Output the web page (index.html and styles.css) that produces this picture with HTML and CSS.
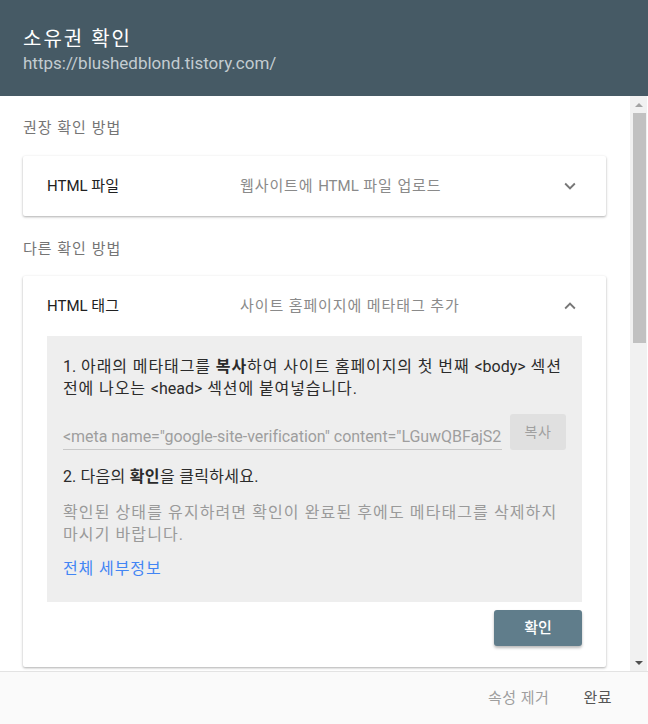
FILE: index.html
```html
<!DOCTYPE html>
<html lang="ko">
<head>
<meta charset="utf-8">
<title>소유권 확인</title>
<link rel="stylesheet" href="styles.css">
</head>
<body>
<div class="dialog">
  <header class="head">
    <div class="head-title">소유권 확인</div>
    <div class="head-url">https://blushedblond.tistory.com/</div>
  </header>
  <div class="middle">
    <div class="content">
      <div class="label first">권장 확인 방법</div>
      <div class="card">
        <div class="card-row">
          <span class="row-title">HTML 파일</span>
          <span class="row-desc">웹사이트에 <span class="lat">HTML</span> 파일 업로드</span>
          <svg class="chev" viewBox="0 0 24 24" width="22" height="22"><path d="M7.41 8.59L12 13.17l4.59-4.58L18 10l-6 6-6-6 1.41-1.41z" fill="#777"/></svg>
        </div>
      </div>
      <div class="label second">다른 확인 방법</div>
      <div class="card">
        <div class="card-row">
          <span class="row-title">HTML 태그</span>
          <span class="row-desc">사이트 홈페이지에 메타태그 추가</span>
          <svg class="chev" viewBox="0 0 24 24" width="22" height="22"><path d="M7.41 15.41L12 10.83l4.59 4.58L18 14l-6-6-6 6 1.41 1.41z" fill="#777"/></svg>
        </div>
        <div class="panel">
          <p class="step"><span class="ln"><span class="lat">1.</span> 아래의 메타태그를 <b>복사</b>하여 사이트 홈페이지의 첫 번째 <span class="lat">&lt;body&gt;</span> 섹션</span><span class="ln">전에 나오는 <span class="lat">&lt;head&gt;</span> 섹션에 붙여넣습니다<span class="lat">.</span></span></p>
          <div class="copy-row">
            <div class="meta-field">&lt;meta name="google-site-verification" content="LGuwQBFajS2</div>
            <div class="copy-btn">복사</div>
          </div>
          <p class="step step2"><span class="lat">2.</span> 다음의 <b>확인</b>을 클릭하세요<span class="lat">.</span></p>
          <p class="note"><span class="ln">확인된 상태를 유지하려면 확인이 완료된 후에도 메타태그를 삭제하지</span><span class="ln">마시기 바랍니다<span class="lat">.</span></span></p>
          <a class="details" href="#">전체 세부정보</a>
        </div>
        <div class="actions">
          <div class="confirm">확인</div>
        </div>
      </div>
    </div>
    <div class="scrollbar">
      <div class="arrow up"></div>
      <div class="thumb"></div>
      <div class="spacer"></div>
      <div class="arrow down"></div>
    </div>
    <div class="edge"></div>
  </div>
  <footer class="foot">
    <span class="foot-btn muted">속성 제거</span>
    <span class="foot-btn">완료</span>
  </footer>
</div>
</body>
</html>
```

FILE: styles.css
```css
* { box-sizing: border-box; }
html, body { margin: 0; padding: 0; }
body {
  width: 648px;
  height: 724px;
  overflow: hidden;
  background: #fff;
  font-family: Roboto, "Noto Sans CJK KR", sans-serif;
  color: #212121;
}
.lat { letter-spacing: 0; }
.dialog {
  display: flex;
  flex-direction: column;
  width: 648px;
  height: 724px;
}
.head {
  height: 96px;
  flex: none;
  background: #465a65;
  padding: 26px 23px 0;
}
.head-title {
  color: #fff;
  font-size: 20px;
  line-height: 26px;
  letter-spacing: 2px;
}
.head-url {
  color: #c3ccd1;
  font-size: 17px;
  line-height: 20px;
  margin-top: 1px;
}
.middle {
  flex: 1;
  display: flex;
  min-height: 0;
}
.content {
  flex: 1;
  overflow: hidden;
  padding: 22px 24px 0 23px;
}
.label {
  font-size: 15px;
  line-height: 20px;
  color: #757575;
  letter-spacing: 1px;
}
.label.first { margin-bottom: 18px; }
.label.second { margin-top: 23px; margin-bottom: 17px; }
.card {
  background: #fff;
  border-radius: 2px;
  box-shadow: 0 1px 3px rgba(0,0,0,.22), 0 1px 2px rgba(0,0,0,.12);
}
.card-row {
  height: 60px;
  display: grid;
  grid-template-columns: 193px 1fr 22px;
  align-items: center;
  padding: 0 25px 0 24px;
  font-size: 15px;
  line-height: 20px;
}
.row-title { color: #212121; }
.row-desc { color: #8a8a8a; letter-spacing: 0.9px; }
.chev { display: block; }
.panel {
  margin: 0 24px;
  background: #eeeeee;
  padding: 20px 16px 22px;
  font-size: 16px;
  line-height: 22px;
  letter-spacing: 0.9px;
}
.panel p { margin: 0; }
.ln { display: block; white-space: nowrap; }
.step { color: #2b2b2b; }
.step b { font-weight: 700; }
.copy-row {
  display: flex;
  gap: 8px;
  margin-top: 14px;
  height: 36px;
}
.meta-field {
  flex: 1;
  min-width: 0;
  white-space: nowrap;
  color: #9e9e9e;
  padding-top: 12px;
  line-height: 22px;
  height: 36px;
  letter-spacing: -0.05px;
  border-bottom: 1px solid #c8c8c8;
}
.copy-btn {
  width: 56px;
  flex: none;
  background: #e0e0e0;
  border-radius: 3px;
  color: #a0a0a0;
  font-size: 14px;
  line-height: 36px;
  text-align: center;
  letter-spacing: 0.5px;
}
.step2 { margin-top: 16px !important; letter-spacing: 0.3px; }
.note {
  margin-top: 14px !important;
  color: #9a9a9a;
  letter-spacing: 1.1px;
}
.details {
  display: block;
  margin-top: 12px;
  color: #4285f4;
  text-decoration: none;
}
.actions {
  display: flex;
  justify-content: flex-end;
  padding: 8px 24px 21px;
}
.confirm {
  width: 88px;
  height: 36px;
  background: #607d8b;
  color: #fff;
  border-radius: 3px;
  font-size: 15px;
  font-weight: 500;
  line-height: 36px;
  text-align: center;
  box-shadow: 0 2px 3px rgba(0,0,0,.28);
}
.scrollbar {
  width: 17px;
  flex: none;
  background: #f1f1f1;
  display: flex;
  flex-direction: column;
  align-items: center;
}
.arrow {
  width: 17px;
  height: 17px;
  flex: none;
  display: flex;
  align-items: center;
  justify-content: center;
}
.arrow::before {
  content: "";
  width: 0;
  height: 0;
  border-left: 4px solid transparent;
  border-right: 4px solid transparent;
}
.arrow.up::before { border-bottom: 4px solid #a3a3a3; }
.arrow.down::before { border-top: 4px solid #505050; }
.thumb {
  width: 13px;
  height: 230px;
  flex: none;
  background: #c1c1c1;
  margin-left: 1px;
}
.spacer { flex: 1; }
.edge { width: 1px; flex: none; background: #fff; }
.foot {
  height: 53px;
  flex: none;
  background: #fafafa;
  border-top: 1px solid #e3e3e3;
  display: flex;
  justify-content: flex-end;
  align-items: center;
  gap: 34px;
  padding: 0 36px 0 0;
  font-size: 15px;
  line-height: 20px;
}
.foot-btn { color: #555; letter-spacing: 0.5px; }
.foot-btn.muted { color: #9e9e9e; }
```
